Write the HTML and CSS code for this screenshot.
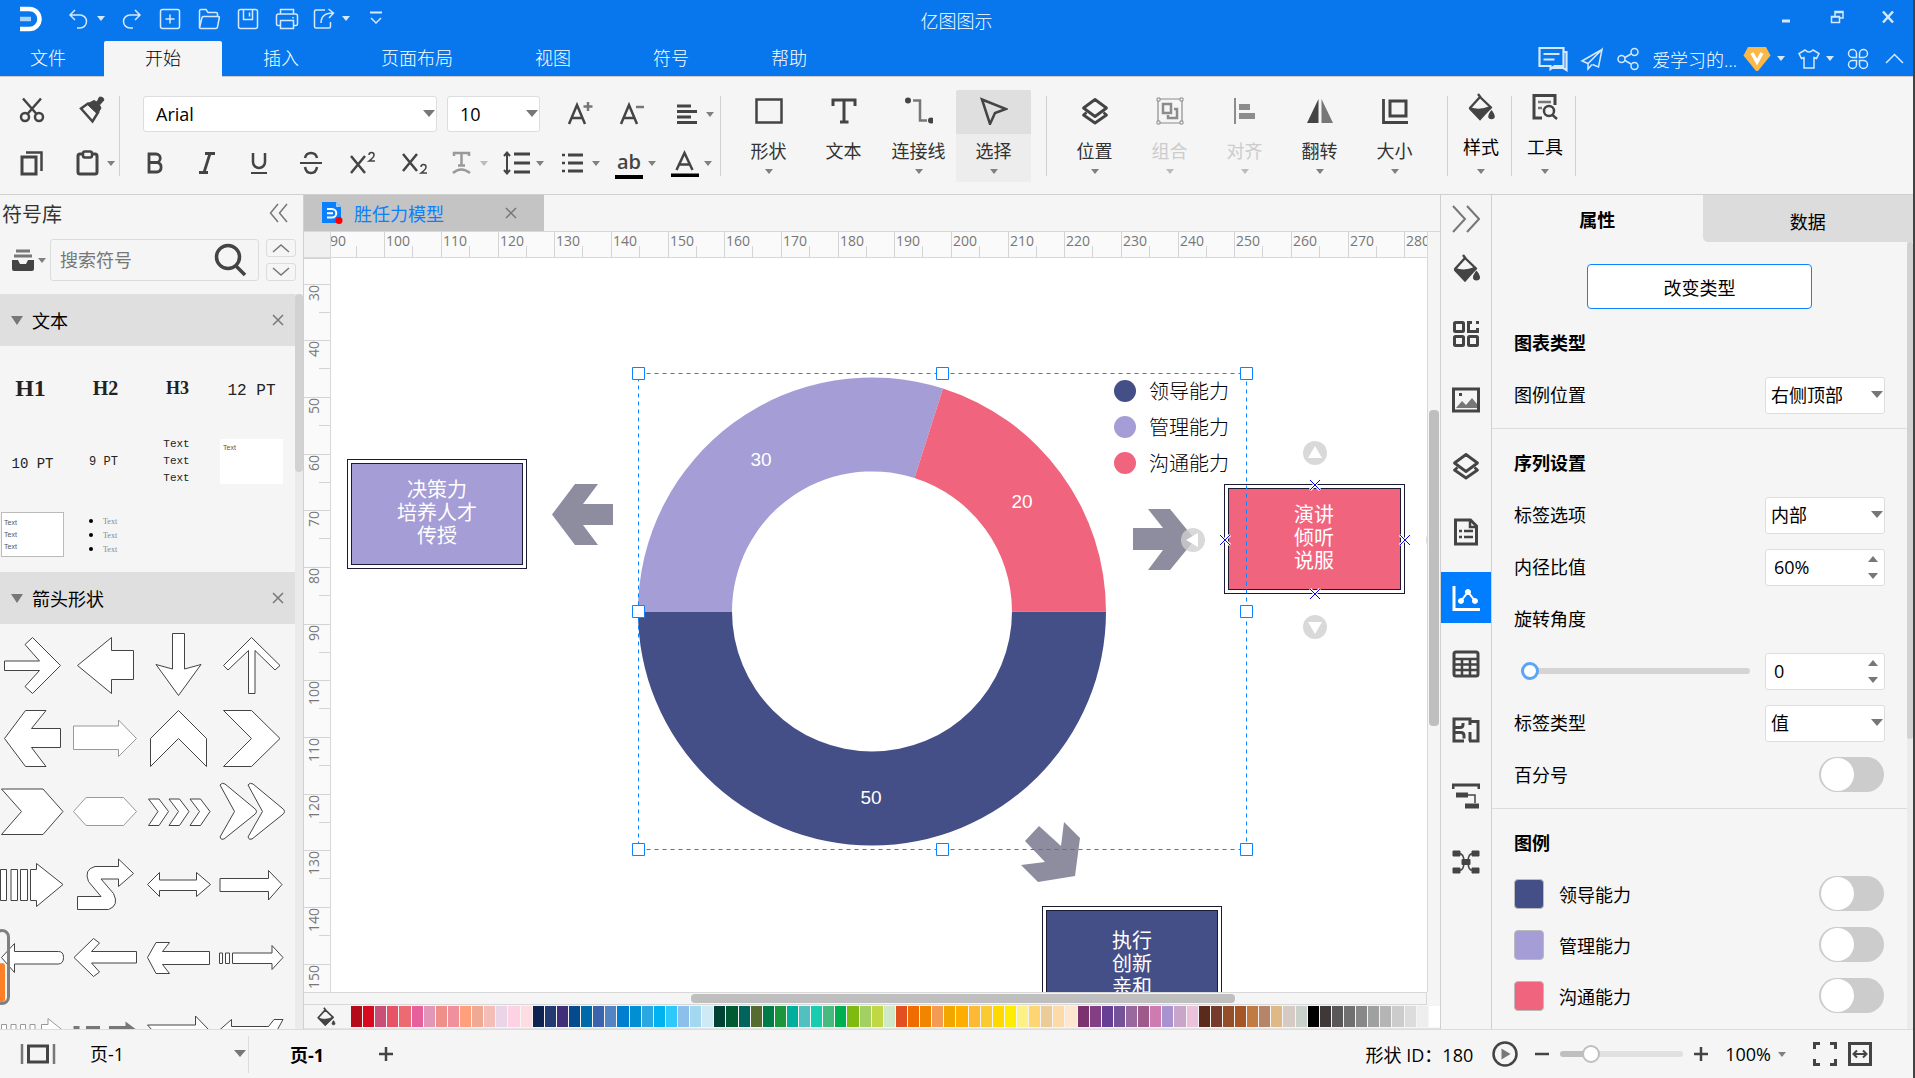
FILE: index.html
```
<!DOCTYPE html>
<html lang="zh-CN">
<head>
    <meta charset="UTF-8">
    <meta name="viewport" content="width=device-width, initial-scale=1.0">
    <title>亿图图示</title>
    <link rel="stylesheet" href="styles.css">
</head>
<body>

<svg class="defs" aria-hidden="true">
    <symbol id="bucket" viewBox="0 0 28 28"><path d="M11 1l3 4M13 4L3 15l10 10L24 14.5z" fill="none" stroke="currentColor" stroke-width="2.4" stroke-linejoin="round"/><path d="M3 15.5c7 2.500 13 2 20-1L13 26z" fill="currentColor"/><path d="M24.500 19c3 4 2.500 6 0 6s-3-2 0-6z" fill="currentColor"/></symbol>
    <symbol id="layers" viewBox="0 0 28 28"><path d="M14 2.500l11.500 8.500L14 19.500 2.500 11zM5.500 15.500l-3 2.500L14 26l11.500-8-3-2.500" fill="none" stroke="currentColor" stroke-width="2.800" stroke-linejoin="round"/></symbol>
</svg>

<div class="app">
    <header class="topbar">
        <div class="title-row">
            <div class="quick">
                <svg class="logo" viewBox="0 0 24 26"><path d="M1 3h9.500a10 10 0 0 1 0 20H1" fill="none" stroke="#fff" stroke-width="4.500"/><path d="M1 13h11" stroke="#a9d2fb" stroke-width="4.500"/></svg>
                <button class="q q-drop" aria-label="撤销"><svg viewBox="0 0 24 24"><path d="M8 3L3 8l5 5M3 8h10a6.500 6.500 0 0 1 0 13h-3"/></svg><i class="caret"></i></button>
                <button class="q" aria-label="重做"><svg viewBox="0 0 24 24"><path d="M16 3l5 5-5 5M21 8H11a6.500 6.500 0 0 0 0 13h3"/></svg></button>
                <button class="q" aria-label="新建"><svg viewBox="0 0 24 24"><rect x="2.500" y="2.500" width="19" height="19" rx="2"/><path d="M12 7.500v9M7.500 12h9"/></svg></button>
                <button class="q" aria-label="打开"><svg viewBox="0 0 24 24"><path d="M2.500 21V4q0-1.500 1.500-1.500h5l2 3h8q1.500 0 1.500 1.500v2.500M2.500 21L5 10.500q.3-1 1.500-1h15q1 0 .8 1L20.500 20q-.3 1.500-1.500 1.500H3.500q-1 0-1-1z"/></svg></button>
                <button class="q" aria-label="保存"><svg viewBox="0 0 24 24"><rect x="2.500" y="2.500" width="19" height="19" rx="2"/><path d="M7.500 2.500v10h9v-10M13.500 5.500v4"/></svg></button>
                <button class="q" aria-label="打印"><svg viewBox="0 0 24 24"><path d="M5.500 7V2.500h13V7M5 18.500H3Q1.500 18.500 1.500 17V9Q1.500 7 3.500 7h17q2 0 2 2v8q0 1.500-1.500 1.500h-2M5.500 13.500h13v8h-13zM18 10v1.500"/></svg></button>
                <button class="q q-drop" aria-label="导出"><svg viewBox="0 0 24 24"><path d="M13 3H4Q2.500 3 2.500 4.500v15Q2.500 21 4 21h13q1.500 0 1.500-1.500V15M9 16q0-10 12-10M16.500 2l5 4-4.500 5"/></svg><i class="caret"></i></button>
                <button class="q" aria-label="更多"><svg viewBox="0 0 24 24"><path d="M6 5.500h12" stroke-width="2"/><path d="M7 11l5 5 5-5"/></svg></button>
            </div>
            <span class="app-title">亿图图示</span>
            <div class="win">
                <button aria-label="最小化"><svg viewBox="0 0 16 16"><path d="M4 12h8" stroke-width="3"/></svg></button>
                <button aria-label="还原"><svg viewBox="0 0 16 16"><path d="M2.500 7.500h8v6h-8zM2 8h9M6 7V2.500h8V9h-3M6 3.500h8" stroke-width="1.500"/></svg></button>
                <button aria-label="关闭"><svg viewBox="0 0 16 16"><path d="M3 2.500l10 11M13 2.500l-10 11" stroke-width="2.500"/></svg></button>
            </div>
        </div>
        <div class="tab-row">
            <nav class="tabs">
                <a class="file" href="#">文件</a>
                <a class="active" href="#">开始</a>
                <a href="#">插入</a>
                <a href="#">页面布局</a>
                <a href="#">视图</a>
                <a href="#">符号</a>
                <a href="#">帮助</a>
            </nav>
            <div class="account">
                <button aria-label="评论"><svg class="w30" viewBox="0 0 30 26"><path d="M2 2h24v18h-9l-4 3v-3H2zM26 6h3v18l-3-2H15" stroke-width="2.200"/><path d="M6 8h16M6 13.500h11" stroke-width="2"/></svg></button>
                <button aria-label="发送"><svg viewBox="0 0 24 24"><path d="M22 2.500L2 14l6 2.500L22 2.500l-3.500 17.500-6-2.500M8 16.500V22l4-4.500"/></svg></button>
                <button aria-label="分享"><svg viewBox="0 0 24 24"><circle cx="5.500" cy="12" r="3.500"/><circle cx="18.500" cy="5" r="3.500"/><circle cx="18.500" cy="19" r="3.500"/><path d="M9 10.500L15 7M9 13.500L15 17"/></svg></button>
                <button class="user"><span>爱学习的...</span>
                    <svg class="vip" viewBox="0 0 28 26"><path d="M5 1h18l4.500 8.500L15 25h-2L.5 9.500z" fill="#f9b848"/><path d="M9 7l5 9 5-9" stroke="#fff" stroke-width="3.500"/></svg><i class="caret"></i></button>
                <button class="shirt" aria-label="皮肤"><svg viewBox="0 0 24 24"><path d="M8 3q4 4 8 0l6 3.500-2.500 5-2.500-1V21H7V10.500l-2.500 1L2 6.500z"/></svg><i class="caret"></i></button>
                <button aria-label="应用"><svg viewBox="0 0 24 24"><path d="M10.500 10.500v-4a4 4 0 1 0-4 4zM13.500 10.500v-4a4 4 0 1 1 4 4zM10.500 13.500v4a4 4 0 1 1-4-4zM13.500 13.500v4a4 4 0 1 0 4-4z"/></svg></button>
                <button aria-label="收起功能区"><svg viewBox="0 0 24 24"><path d="M4 16l8.500-8.500L21 16"/></svg></button>
            </div>
        </div>
    </header>

    <div class="ribbon">
        <div class="clip">
            <button aria-label="剪切"><svg viewBox="0 0 28 28"><path d="M5 2.500l14 16M23 2.500L9 18.500"/><circle cx="7" cy="21" r="4"/><circle cx="21" cy="21" r="4"/></svg></button>
            <button aria-label="格式刷"><svg viewBox="0 0 28 28"><path d="M3 12.500l7-5 10 9-5.500 9z"/><path d="M9 8l7-3.500 3 1.500 2.500-5q4-.5 4.500 3l-4.500 5 1.500 3-3.500 6z" fill="currentColor" stroke-width="1"/></svg></button>
            <button aria-label="复制"><svg viewBox="0 0 28 28"><path d="M4 8h14v17H4z" stroke-width="3"/><path d="M8 3.500h15.500V22" stroke-width="2.500"/></svg></button>
            <button class="paste" aria-label="粘贴"><svg viewBox="0 0 28 28"><rect x="4" y="5" width="19" height="20" rx="2" stroke-width="3"/><rect x="9" y="2.500" width="9" height="6" rx="2" fill="#f5f5f5"/></svg><i class="caret"></i></button>
        </div>
        <i class="sep"></i>
        <div class="font">
            <div class="font-row">
                <span class="drop family"><select aria-label="字体"><option>Arial</option></select></span>
                <span class="drop size"><select aria-label="字号"><option>10</option></select></span>
                <button class="grow" aria-label="增大字号"><svg viewBox="0 0 28 28"><path d="M3 24L11 5l8 19M6 18h10"/><path d="M22 2v9M17.500 6.500h9" stroke="#777"/></svg></button>
                <button aria-label="减小字号"><svg viewBox="0 0 28 28"><path d="M3 24L11 5l8 19M6 18h10"/><path d="M18 7h8" stroke="#777"/></svg></button>
                <button class="dd" aria-label="段落对齐"><svg viewBox="0 0 28 28"><path d="M4 6h14M4 11.500h20M4 17h14M4 22.500h20" stroke-width="2.800"/></svg><i class="caret"></i></button>
            </div>
            <div class="font-row low">
                <button aria-label="加粗"><svg viewBox="0 0 28 28"><path d="M8 5h7a4.200 4.200 0 0 1 0 8.500H8zM8 13.500h8a4.800 4.800 0 0 1 0 9.500H8z" stroke-width="2.800"/></svg></button>
                <button aria-label="斜体"><svg viewBox="0 0 28 28"><path d="M12 4.500h10M6 23.500h9M17 4.500l-6 19" stroke-width="2.800"/></svg></button>
                <button aria-label="下划线"><svg viewBox="0 0 28 28"><path d="M8 4v9a6 6 0 0 0 12 0V4"/><path d="M6 24h16" stroke-width="2"/></svg></button>
                <button aria-label="删除线"><svg viewBox="0 0 28 28"><path d="M20 9q-1-5-6-5t-6 5M8 18q1 6 6 6t6-6"/><path d="M3 14h22" stroke-width="2"/></svg></button>
                <button aria-label="上标"><svg viewBox="0 0 28 28"><path d="M2 7l14 17M16 7L2 24"/><path d="M20 6q0-2.500 2.500-2.500T25 6t-5 6h6" stroke-width="1.500"/></svg></button>
                <button aria-label="下标"><svg viewBox="0 0 28 28"><path d="M2 5l14 17M16 5L2 22"/><path d="M20 18q0-2.500 2.500-2.500T25 18t-5 6h6" stroke-width="1.500"/></svg></button>
                <button class="dd off first" aria-label="艺术字"><svg viewBox="0 0 28 28"><path d="M7 7V4h15v3M14.500 4v12M11 16.500h7M6 24q8-7 17 0"/></svg><i class="caret"></i></button>
                <button class="dd" aria-label="行距"><svg viewBox="0 0 28 28"><path d="M11 5h16M11 14h16M11 23h16" stroke-width="2.800"/><path d="M4 3.500v21M1 7l3-3.500L7 7M1 21l3 3.500L7 21" stroke-width="2"/></svg><i class="caret"></i></button>
                <button class="dd" aria-label="项目符号"><svg viewBox="0 0 28 28"><path d="M9 6h15M9 14h15M9 22h15" stroke-width="2.800"/><path d="M3 6h3M3 14h3M3 22h3"/></svg><i class="caret"></i></button>
                <button class="dd ink" aria-label="突出显示"><span>ab</span><i class="caret"></i></button>
                <button class="dd" aria-label="字体颜色"><svg viewBox="0 0 28 28"><path d="M5.500 21L13.500 4l8 17M9 15.500h9.500"/><path d="M0 27h28" stroke="#000" stroke-width="5"/></svg><i class="caret"></i></button>
            </div>
        </div>
        <i class="sep"></i>
        <div class="big-group">
            <button class="big"><svg viewBox="0 0 28 28"><rect x="1.500" y="2.500" width="25" height="23"/></svg>形状<i class="caret"></i></button>
            <button class="big"><svg viewBox="0 0 28 28"><path d="M3 9V3h22v6M14 3v21M10 25h8.500" stroke-width="3"/></svg>文本</button>
            <button class="big"><svg viewBox="0 0 28 28"><circle cx="3" cy="3.500" r="3" fill="currentColor" stroke="none"/><circle cx="26" cy="23.500" r="3" fill="currentColor" stroke="none"/><path d="M8 3.500h7v20h7" stroke="#777"/></svg>连接线<i class="caret"></i></button>
            <button class="big selected"><svg viewBox="0 0 28 28"><path d="M2 2.500l24 9.500-11 4-5 11z"/></svg>选择<i class="caret"></i></button>
        </div>
        <i class="sep"></i>
        <div class="big-group">
            <button class="big"><svg><use href="#layers"/></svg>位置<i class="caret"></i></button>
            <button class="big off"><svg viewBox="0 0 28 28"><path d="M2 2h24v24H2z" stroke-width="1.200"/><path d="M7 7h8v9H7zM18 12h3v9h-9v-3" stroke-width="2.500"/><path d="M1 1h3v3H1zM24 1h3v3h-3zM1 24h3v3H1zM24 24h3v3h-3z" fill="#f5f5f5" stroke-width="1"/></svg>组合<i class="caret"></i></button>
            <button class="big off"><svg viewBox="0 0 28 28"><path d="M4 1v26" stroke-width="2"/><path d="M8 7h11v6H8zM8 16h16v6H8z" fill="currentColor" stroke="none"/></svg>对齐<i class="caret"></i></button>
            <button class="big"><svg viewBox="0 0 28 28"><path d="M12.500 2v24H1z" fill="currentColor" stroke="none"/><path d="M15.500 2v24H27z" fill="#777" stroke="none"/></svg>翻转<i class="caret"></i></button>
            <button class="big"><svg viewBox="0 0 28 28"><path d="M2.500 2v23.500H27" stroke-width="2.800"/><rect x="9" y="4" width="16" height="15" stroke-width="3"/></svg>大小<i class="caret"></i></button>
        </div>
        <i class="sep"></i>
        <button class="big slim"><svg><use href="#bucket"/></svg>样式<i class="caret"></i></button>
        <i class="sep"></i>
        <button class="big slim"><svg viewBox="0 0 28 28"><path d="M24 12V2.500H3V25h8" stroke-width="3"/><path d="M7 9h13M7 15h4" stroke="#777"/><circle cx="18" cy="18" r="5"/><path d="M21.500 22l4.500 4"/></svg>工具<i class="caret"></i></button>
        <i class="sep"></i>
    </div>

    <div class="main">
        <aside class="library">
            <div class="lib-head"><span>符号库</span><button aria-label="折叠"><svg viewBox="0 0 20 20"><path d="M9 1L1.500 10 9 19M18 1l-7.500 9 7.500 9"/></svg></button></div>
            <div class="lib-search">
                <button class="stack" aria-label="符号分类"><svg viewBox="0 0 24 24"><path d="M5 3h14M3 8h18" stroke="#777" stroke-width="3"/><path d="M1 12h6l2 4h6l2-4h6v9q0 2-2 2H3q-2 0-2-2z" fill="#444" stroke="none"/></svg><i class="caret"></i></button>
                <label class="search"><input type="text" placeholder="搜索符号" aria-label="搜索符号"><svg viewBox="0 0 34 34"><circle cx="14" cy="14" r="11.500"/><path d="M22 23l9 9"/></svg></label>
                <div class="updown">
                    <button aria-label="上一个"><svg viewBox="0 0 18 10"><path d="M1 9l8-7 8 7"/></svg></button>
                    <button aria-label="下一个"><svg viewBox="0 0 18 10"><path d="M1 1l8 7 8-7"/></svg></button>
                </div>
            </div>
            <div class="lib-body">
                <div class="lib-list">
                    <h3><i class="caret"></i>文本<button aria-label="关闭文本"><svg viewBox="0 0 12 12"><path d="M1 1l10 10M11 1L1 11"/></svg></button></h3>
                    <div class="shapes texts">
                        <span class="h1">H1</span><span class="h2">H2</span><span class="h3">H3</span><span class="pt12">12 PT</span>
                        <span class="pt10">10 PT</span><span class="pt9">9 PT</span><span class="lines">Text<br>Text<br>Text</span><span><b class="note">Text</b></span>
                        <span><b class="note framed">Text<br>Text<br>Text</b></span>
                        <ul><li>Text</li><li>Text</li><li>Text</li></ul>
                    </div>
                    <h3><i class="caret"></i>箭头形状<button aria-label="关闭箭头形状"><svg viewBox="0 0 12 12"><path d="M1 1l10 10M11 1L1 11"/></svg></button></h3>
                    <div class="shapes arrows">
                        <svg viewBox="0 0 73 73"><path d="M8.500 32H43.500L29 15.500l7.500-7L64.500 36.500l-28 28-7.500-7 14.500-16H8.500z"/></svg>
                        <svg viewBox="0 0 73 73"><path d="M8.500 36.500l34-28v13h22v29h-22v14z"/></svg>
                        <svg viewBox="0 0 73 73"><path d="M30.500 4.500h12V40L59 35.500l-22.500 31L14 35.500 30.500 40z"/></svg>
                        <svg viewBox="0 0 73 73"><path d="M36.500 8.500L65 36.500 60 41 40 21.500v43h-6.500v-43L13 41l-4.500-4.500z"/></svg>
                        <svg viewBox="0 0 73 73"><path d="M8.500 36.500l21-28H50l-14.500 18h29v19h-29l14.500 19H29.500z"/></svg>
                        <svg class="pale" viewBox="0 0 73 73"><path d="M4.500 24h45v-6l18 18.500-18 18v-7h-45z"/></svg>
                        <svg viewBox="0 0 73 73"><path d="M36.500 8.500l28 28v28l-28-28-28 28v-28z"/></svg>
                        <svg viewBox="0 0 73 73"><path d="M8.500 8.500h28L65 36.500l-28.500 28h-28l28-28z"/></svg>
                        <svg viewBox="0 0 73 73"><path d="M5.500 14H47l20 22.500-20 23H5.500l20-23z"/></svg>
                        <svg class="pale" viewBox="0 0 73 73"><path d="M4.500 36.500l12.500-14h37.500l13 14-13 14H17z"/></svg>
                        <svg viewBox="0 0 73 73"><path d="M6.500 24H17l9.500 12.500-9.500 14H6.500L16 36.500zM27 24h10.500L47 36.500l-9.500 14H27l9.500-14zM48 24h10.500L68 36.500l-9.500 14H48l9.500-14z"/></svg>
                        <svg viewBox="0 0 73 73"><path d="M5 10q2-3 5-1l29 24q5 3.500 0 7L9 64q-3 1.500-4-2l14.500-25.500zM33 10q2-3 5-1l29 24q5 3.500 0 7L37 64q-3 1.500-4-2l14.500-25.500z"/></svg>
                        <svg viewBox="0 0 73 73"><path d="M4.500 21.500h6v31h-6zM15 21.500h6.500v31H15zM24.500 21.500h7v31h-7zM34.500 21.500h6v-6L67 36.500l-26.500 22v-6h-6z"/></svg>
                        <svg viewBox="0 0 73 73"><path d="M8.500 48.500H32L19.500 33.500q-5-12 6.500-15h23.500V11l15 14.500-15 13V31H32l12.500 14.500q6 12-5 16h-31z"/></svg>
                        <svg viewBox="0 0 73 73"><path d="M5.500 36.500l12-12V32h37v-7.500l14 12-14 12v-6h-37v6z"/></svg>
                        <svg viewBox="0 0 73 73"><path d="M5 30.500h48.500v-8L67 36.500 53.500 52v-8.500H5z"/></svg>
                        <svg viewBox="0 0 73 73"><path d="M5.500 36.500l13-14v8h44q5 0 5 6t-5 6.500h-44v8.500z"/></svg>
                        <svg viewBox="0 0 73 73"><path d="M5 36.500l19.500-19 6 4.500-8 8.500h45V42h-45l8 9-6 4.500z"/></svg>
                        <svg viewBox="0 0 73 73"><path d="M5.500 36.500l8.500-15h13.500l-7 9h47v13h-47l7 9H14z"/></svg>
                        <svg viewBox="0 0 73 73"><path d="M4.500 32h3v10.500h-3zM10.500 32h4v10.500h-4zM17.500 32H57v-7.500l11 12-11 12v-6H17.500z"/></svg>
                        <svg class="pale" viewBox="0 0 73 73"><path d="M5.500 30.500h5v12h-5zM15 30.500h5v12h-5zM24.500 30.500h5v12h-5zM34 30.500h5v12h-5zM45.500 30.500H52v-6l15 12-15 12v-6h-6.500z"/></svg>
                        <svg class="solid" viewBox="0 0 73 73"><path d="M4.500 32h6v9h-6zM17 32h14v9H17zM40 32h16.500v-4.500l12 9-12 9V41H40z"/></svg>
                        <svg viewBox="0 0 73 73"><path d="M5.500 31h48v-9l14 14.500-14 14V42h-38z"/></svg>
                        <svg viewBox="0 0 73 73"><path d="M4 36.500l12.500-11v7h37l5.500-7h9l-6 11 6 11h-9l-5.500-7h-37v7z"/></svg>
                    </div>
                </div>
                <div class="track"><div class="thumb"></div></div>
            </div>
            <div class="edge-grip"></div>
        </aside>

        <section class="doc">
            <div class="doc-tabs">
                <div class="doc-tab">
                    <svg viewBox="0 0 22 22"><path d="M1 0h14l5 5v16H1z" fill="#0a80ff"/><path d="M15 0l5 5h-5z" fill="#9cc9f8"/><path d="M6 7h5a4 4 0 0 1 0 8.500H6M6 11.200h6" fill="none" stroke="#fff" stroke-width="2"/><circle cx="18" cy="18.500" r="3.500" fill="#f00"/></svg>
                    <a href="#">胜任力模型</a>
                    <button aria-label="关闭文档"><svg viewBox="0 0 12 12"><path d="M1 1l10 10M11 1L1 11"/></svg></button>
                </div>
            </div>
            <div class="work">
                <div class="corner"></div>
                <svg class="ruler-h" id="rulerH"></svg>
                <svg class="ruler-v" id="rulerV"></svg>
                <div class="stage">
                    <svg>
                        <g transform="translate(-331 -258)">
                            <!-- cards -->
                            <g class="card"><rect x="347.500" y="459.500" width="179" height="109"/><rect class="lilac" x="351.500" y="463.500" width="171" height="101"/></g>
                            <text class="card-text" x="437" y="497">决策力<tspan x="437" dy="23">培养人才</tspan><tspan x="437" dy="23">传授</tspan></text>
                            <g class="card"><rect x="1042.500" y="906.500" width="179" height="109"/><rect class="navy" x="1046.500" y="910.500" width="171" height="101"/></g>
                            <text class="card-text" x="1132" y="948">执行<tspan x="1132" dy="23">创新</tspan><tspan x="1132" dy="23">亲和</tspan></text>
                            <g class="card"><rect x="1224.500" y="484.500" width="180" height="109"/><rect class="rose" x="1228.500" y="488.500" width="172" height="101"/></g>
                            <text class="card-text" x="1314" y="522">演讲<tspan x="1314" dy="23">倾听</tspan><tspan x="1314" dy="23">说服</tspan></text>

                            <!-- arrows -->
                            <g fill="#8e8c9f">
                                <path d="M552 514.500L575 484h23l-15 20h30v21h-30l15 20h-23z"/>
                                <path d="M1133 528h30l-15-19h22l25 30.500-25 30.500h-22l15-20h-30z"/>
                                <path d="M1064 822l16 16-5 38-37 6-17-17 24-3-20-21 14-15 22 20z"/>
                            </g>

                            <!-- donut -->
                            <path class="navy" d="M638 611.500a234 234 0 0 0 468 0h-94a140 140 0 0 1-280 0z"/>
                            <path class="lilac" d="M638 611.500A234 234 0 0 1 943 388.500L914.500 478A140 140 0 0 0 732 611.500z"/>
                            <path class="rose" d="M943 388.500A234 234 0 0 1 1106 611.500H1012A140 140 0 0 0 914.500 478z"/>
                            <g class="value"><text x="761" y="466">30</text><text x="1022" y="508">20</text><text x="871" y="804">50</text></g>

                            <!-- legend -->
                            <circle class="navy" cx="1125" cy="391" r="11"/><circle class="lilac" cx="1125" cy="427" r="11"/><circle class="rose" cx="1125" cy="463" r="11"/>
                            <g class="legend-text"><text x="1149" y="399">领导能力</text><text x="1149" y="435">管理能力</text><text x="1149" y="471">沟通能力</text></g>

                            <!-- selection -->
                            <g fill="none" stroke="#0a84ff"><rect x="638.500" y="373.500" width="608" height="476" stroke-dasharray="4 4"/></g>
                            <g fill="#fff" stroke="#0a84ff">
                                <path d="M632.500 367.500h12v12h-12zM936.500 367.500h12v12h-12zM1240.500 367.500h12v12h-12zM632.500 605.500h12v12h-12zM1240.500 605.500h12v12h-12zM632.500 843.500h12v12h-12zM936.500 843.500h12v12h-12zM1240.500 843.500h12v12h-12z"/>
                            </g>

                            <!-- quick connect handles -->
                            <g fill="#d0d0d0" fill-opacity="0.8"><circle cx="1315" cy="453" r="12"/><circle cx="1193" cy="540" r="12"/><circle cx="1315" cy="627" r="12"/><circle cx="1438" cy="540" r="12"/></g>
                            <path fill="#fff" d="M1315 446l7 12h-14zM1186 540l12-7v14zM1315 634l7-12h-14z"/>
                            <g class="cross-halo"><path d="M1310 480l10 10m0-10l-10 10M1220 535l10 10m0-10l-10 10M1400 535l10 10m0-10l-10 10M1310 589l10 10m0-10l-10 10"/></g>
                            <g class="cross"><path d="M1310 480l10 10m0-10l-10 10M1220 535l10 10m0-10l-10 10M1400 535l10 10m0-10l-10 10M1310 589l10 10m0-10l-10 10"/></g>
                        </g>
                    </svg>
                </div>
                <div class="vbar"><div class="thumb"></div></div>
                <div class="hbar"><div class="thumb"></div></div>
            </div>
            <div class="palette">
                <button class="fill" aria-label="填充"><svg><use href="#bucket"/></svg></button>
                <div class="swatches" id="swatches"></div>
            </div>
        </section>

        <nav class="rail">
            <button class="fold" aria-label="折叠面板"><svg viewBox="0 0 28 28"><path d="M1 1l12 13L1 27M15 1l12 13-12 13" stroke="#777" stroke-width="2"/></svg></button>
            <button aria-label="填充"><svg><use href="#bucket"/></svg></button>
            <button aria-label="符号"><svg viewBox="0 0 28 28"><rect x="2.500" y="2.500" width="9" height="9" rx="1"/><rect x="2.500" y="16.500" width="9" height="9" rx="1"/><rect x="16.500" y="16.500" width="9" height="9" rx="1"/><path d="M20 2.500h-3.500v9h9V8M24 2.500h3"/></svg></button>
            <button aria-label="图片"><svg viewBox="0 0 28 28"><rect x="1.500" y="3" width="25" height="22"/><path d="M4 22l6-7 4 4 6-7 5 6v4z" fill="#777" stroke="none"/><path d="M7 8.500h3"/></svg></button>
            <button aria-label="图层"><svg><use href="#layers"/></svg></button>
            <button aria-label="文档"><svg viewBox="0 0 28 28"><path d="M3.500 2h15l6 6v18h-21z"/><path d="M18 2v7h7M7 13h3M12 13h9M7 19h3M12 19h9" stroke-width="2.500"/></svg></button>
            <button class="active" aria-label="图表"><svg viewBox="0 0 28 28"><path d="M2 2v23.500h26" stroke-width="3"/><path d="M9 17l7-9 7 9" stroke-width="2"/><path d="M9 14a3 3 0 1 1-.1 0zM16 5a3 3 0 1 1-.1 0zM23 14a3 3 0 1 1-.1 0z" fill="currentColor" stroke="none"/></svg></button>
            <button aria-label="表格"><svg viewBox="0 0 28 28"><rect x="2" y="2" width="24" height="24" rx="2"/><path d="M2 9h24M2 14.500h24M2 20h24M10 9v17M18 9v17" stroke-width="2.500"/></svg></button>
            <button aria-label="平面图"><svg viewBox="0 0 28 28"><path d="M12 25H2V3h16v6M18 5.500h8V25h-9M2 11.500h6q3 0 3-3V7M2 16.500h7q3 0 3 3v3M18 16v9"/></svg></button>
            <button aria-label="甘特图"><svg viewBox="0 0 28 28"><path d="M1 7V3h26v4"/><path d="M4 13h12" stroke-width="5"/><path d="M16 13h7v8" stroke-width="1.500"/><path d="M13 24h14" stroke-width="5"/></svg></button>
            <button aria-label="思维导图"><svg viewBox="0 0 28 28"><path d="M1 3h7v5H1zM20 3h7v5h-7zM1 20h7v5H1zM20 20h7v5h-7zM10 11.500h8v5h-8z" fill="currentColor" stroke-width="1"/><path d="M7 5.500q5 0 5 8.500t-5 8.500M21 5.500q-5 0-5 8.500t5 8.500" stroke-width="1.500"/></svg></button>
        </nav>

        <aside class="props">
            <div class="prop-tabs"><button class="on">属性</button><button>数据</button></div>
            <div class="prop-body">
                <div class="prop-list">
                    <button class="change">改变类型</button>
                    <section>
                        <h4>图表类型</h4>
                        <div class="row"><label for="legendPos">图例位置</label><span class="drop"><select id="legendPos"><option>右侧顶部</option></select></span></div>
                    </section>
                    <section>
                        <h4>序列设置</h4>
                        <div class="row"><label for="labelOpt">标签选项</label><span class="drop"><select id="labelOpt"><option>内部</option></select></span></div>
                        <div class="row"><label for="inner">内径比值</label><span class="spin"><input type="text" id="inner" value="60%"><button class="up" aria-label="增加"></button><button class="down" aria-label="减少"></button></span></div>
                        <div class="row"><label for="angle">旋转角度</label></div>
                        <div class="row"><input type="range" id="angle" class="angle" min="0" max="360" value="0"><span class="spin"><input type="text" value="0" aria-label="旋转角度值"><button class="up" aria-label="增加"></button><button class="down" aria-label="减少"></button></span></div>
                        <div class="row"><label for="labelType">标签类型</label><span class="drop"><select id="labelType"><option>值</option></select></span></div>
                        <div class="row"><label for="percent">百分号</label><input type="checkbox" class="toggle" id="percent"></div>
                    </section>
                    <section class="series">
                        <h4>图例</h4>
                        <div class="row"><i class="chip navy"></i><label for="s1">领导能力</label><input type="checkbox" class="toggle" id="s1"></div>
                        <div class="row"><i class="chip lilac"></i><label for="s2">管理能力</label><input type="checkbox" class="toggle" id="s2"></div>
                        <div class="row"><i class="chip rose"></i><label for="s3">沟通能力</label><input type="checkbox" class="toggle" id="s3"></div>
                    </section>
                </div>
                <div class="track"><div class="thumb"></div></div>
            </div>
        </aside>
    </div>

    <footer class="status">
        <button class="pages" aria-label="页面列表"><svg viewBox="0 0 36 24"><path d="M2 2v20M34 2v20" stroke="#777" stroke-width="2.500"/><rect x="8.500" y="4" width="19" height="16" stroke-width="3"/></svg></button>
        <span class="drop page"><select aria-label="页面"><option>页-1</option></select></span>
        <button class="page-tab">页-1</button>
        <button class="icon" aria-label="新建页面"><svg viewBox="0 0 16 16"><path d="M8 1v14M1 8h14"/></svg></button>
        <span class="shape-id">形状 ID：180</span>
        <button class="icon play" aria-label="播放"><svg viewBox="0 0 26 26"><circle cx="13" cy="13" r="11.500"/><path d="M9.500 7.500v11l9-5.500z" fill="#777" stroke="none"/></svg></button>
        <button class="icon" aria-label="缩小"><svg viewBox="0 0 16 16"><path d="M1 8h14"/></svg></button>
        <input type="range" class="zoom" aria-label="缩放" min="0" max="100" value="21">
        <button class="icon" aria-label="放大"><svg viewBox="0 0 16 16"><path d="M8 1v14M1 8h14"/></svg></button>
        <button class="percent">100%<i class="caret"></i></button>
        <button class="icon fit" aria-label="全屏"><svg viewBox="0 0 26 26"><path d="M8 2.500H2.500V8M18 2.500h5.500V8M8 23.500H2.500V18M18 23.500h5.500V18" stroke-width="3"/></svg></button>
        <button class="icon fit" aria-label="适应宽度"><svg viewBox="0 0 26 26"><rect x="2.500" y="2.500" width="21" height="21" stroke-width="3"/><path d="M7 13h12M10 9.500L6.500 13l3.500 3.500M16 9.500l3.500 3.500-3.500 3.500" stroke-width="2"/></svg></button>
    </footer>
</div>

<script src="script.js"></script>
</body>
</html>
```

FILE: styles.css
```
* { box-sizing: border-box; }
html, body { height: 100%; margin: 0; }
body { font-family: "Open Sans", "Noto Sans CJK SC", sans-serif; font-size: 18px; color: #000; background: #f5f5f5; overflow: hidden; }
button, input, select { font: inherit; color: inherit; }
button { display: flex; align-items: center; justify-content: center; padding: 0; border: 0; background: none; cursor: pointer; }
a { color: inherit; text-decoration: none; }
svg { flex: none; fill: none; stroke: currentColor; }
.defs { display: none; }

.app { display: flex; flex-direction: column; height: 100%; border-right: 2px solid #434343; }
.caret { flex: none; border: 5px solid transparent; border-top: 6px solid #808080; border-bottom: 0; }

/* title bar */
.topbar { background: #0877ed; color: #fff; border-bottom: 1px solid #ccc; font-weight: 300; }
.topbar .caret { border-top-color: #d5e8fc; }
.topbar button { color: #d5e8fc; }
.title-row { display: grid; grid-template-columns: 1fr auto 1fr; align-items: center; height: 41px; padding-bottom: 4px; }
.quick { display: flex; align-items: center; padding-left: 19px; }
.quick .logo { width: 24px; height: 26px; margin-right: 18px; stroke: none; }
.q { width: 39px; }
.q svg { width: 24px; height: 24px; stroke-width: 1.5; }
.q-drop { width: 50px; gap: 6px; }
.app-title { padding-top: 2px; }
.win { display: flex; justify-content: flex-end; gap: 35px; padding: 0 17px 4px 0; }
.win svg { width: 16px; height: 16px; }
.tab-row { display: flex; justify-content: space-between; height: 35px; }
.tabs { display: flex; }
.tabs a { padding: 0 41px; line-height: 35px; }
.tabs .file { padding: 0 30px; margin-right: 8px; }
.tabs .active { background: #f5f5f5; color: #000; border-radius: 2px 2px 0 0; margin-bottom: -1px; }
.account { display: flex; align-items: center; gap: 12px; padding-right: 7px; }
.account svg { width: 24px; height: 24px; stroke-width: 1.5; }
.account .w30 { width: 31px; height: 26px; }
.account .user { gap: 6px; color: #fff; }
.account .vip { width: 28px; height: 26px; stroke: none; }
.account .shirt { gap: 5px; }

/* ribbon */
.ribbon { display: flex; align-items: flex-start; height: 118px; color: #444; border-bottom: 1px solid #d0d0d0; }
.ribbon svg { width: 28px; height: 28px; stroke-width: 2.5; }
.sep { flex: none; width: 1px; height: 80px; margin-top: 19px; background: #d0d0d0; }
.ribbon .caret, .shirt .caret, .user .caret, .quick .caret, .stack .caret { border-width: 4px; border-top-width: 5px; border-bottom: 0; }
.clip { display: grid; grid-template-columns: 60px 41px; row-gap: 25px; padding: 19px 0 0 18px; }
.clip button { height: 28px; justify-content: flex-start; }
.clip .paste { gap: 5px; margin-left: -4px; }
.font { width: 600px; padding: 19px 0 0 9px; }
.font-row { display: flex; height: 36px; }
.font-row.low { margin-top: 13px; }
.font-row button { flex: none; width: 52px; height: 36px; }
.font-row .dd { width: 41px; margin-left: 15px; justify-content: flex-start; gap: 5px; }
.font-row .dd.first { margin-left: 6px; }
.font-row .grow { margin-left: 14px; }
.ink span { width: 28px; height: 32px; border-bottom: 4px solid #000; font-size: 20px; line-height: 30px; font-weight: 600; }
.off { color: #ccc; }
.off svg { color: #999; }
.off .caret { border-top-color: #bbb; }
.drop { position: relative; display: block; flex: none; height: 37px; }
.drop::after { content: ""; position: absolute; right: 2px; top: 14px; border: 6px solid transparent; border-top: 7px solid #777; border-bottom: 0; pointer-events: none; }
.drop select { width: 100%; height: 100%; padding: 0 5px; appearance: none; background: #fff; border: 1px solid #dcdde0; border-radius: 3px; }
.drop.family { width: 294px; margin-left: 14px; }
.drop.size { width: 93px; margin-left: 10px; }
.font .drop { height: 36px; }
.font select { padding-left: 12px; color: #000; }
.big-group { display: flex; padding: 0 15px 0 10px; }
.big { position: relative; flex-direction: column; justify-content: flex-start; width: 75px; height: 92px; margin-top: 13px; padding-top: 7px; line-height: 26px; color: #333; border-radius: 2px; }
.big svg { margin-bottom: 13px; color: #444; }
.big .caret { position: absolute; bottom: 8px; }
.big.selected { background: linear-gradient(#dfdfdf 44px, #ededed 44px); }
.big.slim { width: 63px; padding: 3px 0 0 3px; color: #000; }
.big.off { color: #ccc; }
.big.off svg { color: #8c8c8c; }

/* columns */
.main { flex: 1; display: flex; min-height: 0; }
.track { background: #ebebeb; }
.thumb { background: #d2d2d2; border-radius: 4px; }

/* symbol library */
.library { position: relative; flex: none; display: flex; flex-direction: column; width: 304px; border-right: 1px solid #d0d0d0; }
.lib-head { display: flex; justify-content: space-between; align-items: center; height: 36px; padding: 0 14px 0 2px; font-size: 20px; color: #333; }
.lib-head svg { width: 20px; height: 20px; color: #777; stroke-width: 1.5; }
.lib-search { display: flex; align-items: center; height: 58px; padding: 8px 7px 8px 11px; margin-bottom: 5px; }
.stack { gap: 3px; width: 39px; justify-content: flex-start; }
.stack svg { width: 24px; height: 24px; }
.search { display: flex; align-items: center; flex: 1; min-width: 0; height: 42px; border: 1px solid #dcdcdc; border-radius: 3px; padding-right: 10px; }
.search input { flex: 1; min-width: 0; width: 0; padding: 0 9px; border: 0; background: none; }
.search input::placeholder { color: #777; }
.search svg { width: 34px; height: 34px; color: #444; stroke-width: 3.5; }
.updown { display: flex; flex-direction: column; gap: 6px; margin-left: 7px; }
.updown button { width: 30px; height: 18px; border: 1px solid #dcdcdc; border-radius: 3px; }
.updown svg { width: 18px; height: 10px; color: #777; stroke-width: 1.5; }
.lib-body { flex: 1; display: flex; min-height: 0; }
.lib-list { flex: 1; overflow: hidden; }
.lib-list h3 { display: flex; align-items: center; gap: 9px; height: 52px; margin: 0; padding: 0 10px 0 11px; background: #dfdfdf; font-size: 18px; font-weight: 400; }
.lib-list h3 .caret { border-width: 6px; border-top: 9px solid #777; border-bottom: 0; }
.lib-list h3 button { margin-left: auto; }
.lib-list h3 svg, .doc-tab button svg { width: 12px; height: 12px; margin: 0 1px; color: #777; stroke-width: 1.5; }
.shapes { display: grid; grid-template-columns: repeat(4, 73px); grid-auto-rows: 73px; width: 292px; margin-left: -4px; }
.texts { padding-top: 6px; height: 226px; font-family: "Liberation Serif", serif; color: #222; }
.texts span { display: flex; align-items: center; justify-content: center; padding-right: 4px; }
.texts .h1 { font-size: 24px; font-weight: 700; }
.texts .h2 { font-size: 20px; font-weight: 700; padding-right: 0; }
.texts .h3 { font-size: 18px; font-weight: 700; padding-right: 2px; }
.texts .pt12 { font: 16px "Liberation Mono", monospace; padding: 4px 0 0; white-space: nowrap; }
.texts .pt10 { font: 14px "Liberation Mono", monospace; padding: 4px 0 0; }
.texts .pt9 { font: 12px "Liberation Mono", monospace; }
.texts .lines { font: 11px/17px "Liberation Mono", monospace; }
.texts span:has(.note) { padding: 0; }
.note { width: 63px; height: 45px; padding: 3px; background: #fff; font: 7px/12px "Liberation Sans", sans-serif; color: #555; }
.note.framed { border: 1px solid #bbb; padding: 4px 2px; }
.texts ul { align-self: center; margin: 0; padding-left: 34px; font: 8px/12px "Liberation Serif", serif; color: #888; }
.texts li::marker { color: #000; font-size: 12px; }
.arrows { padding-top: 5px; }
.arrows svg { width: 73px; height: 73px; fill: #fff; stroke: #444; }
.arrows .pale { stroke: #999; }
.arrows .solid { fill: #777; stroke: none; }
.lib-body .track { width: 8px; }
.lib-body .thumb { height: 178px; }
.edge-grip { position: absolute; left: -6px; bottom: 24px; width: 16px; height: 76px; border: 3px solid #808080; border-radius: 8px; }
.edge-grip::after { content: ""; position: absolute; right: 2px; bottom: 0; width: 6px; height: 39px; border-radius: 3px; background: #ff7f27; }

/* document */
.doc { flex: 1; display: flex; flex-direction: column; min-width: 0; }
.doc-tabs { display: flex; height: 37px; border-bottom: 1px solid #d8d8d8; }
.doc-tab { display: flex; align-items: center; width: 240px; padding: 0 26px 0 17px; background: #c4c4c4; color: #0a80ff; }
.doc-tab > svg { width: 22px; height: 22px; margin-right: 11px; stroke: none; }
.doc-tab button { margin-left: auto; }
.work { flex: 1; display: grid; grid-template-columns: 27px 1fr 13px; grid-template-rows: 26px 1fr 13px; min-height: 0; }
.work > * { min-width: 0; min-height: 0; }
.corner { background: #f0f0f0; border-right: 1px solid #d8d8d8; border-bottom: 1px solid #d8d8d8; }
.ruler-h { width: 100%; height: 26px; background: #fafafa; border-bottom: 1px solid #d8d8d8; }
.ruler-v { width: 27px; height: 100%; background: #fafafa; border-right: 1px solid #d8d8d8; grid-row: 2; }
.work line { stroke: #d4d4d4; shape-rendering: crispEdges; }
.work text { stroke: none; fill: #777; font-size: 14px; }
.stage { background: #fff; overflow: hidden; }
.stage > svg { display: block; width: 100%; height: 100%; stroke: none; }
.card rect { stroke: #1b1b33; fill: #fff; }
.stage .navy { fill: #444f88; }
.stage .lilac { fill: #a49dd6; }
.stage .rose { fill: #f0647e; }
.work .card-text { fill: #fff; font-size: 20px; text-anchor: middle; }
.work .value text { fill: #fff; font: 19px "Liberation Sans", sans-serif; text-anchor: middle; }
.work .legend-text text { fill: #000; font-size: 20px; font-weight: 300; }
.cross-halo { stroke: #fff; stroke-width: 3; }
.cross { stroke: #00f; }
.vbar { grid-column: 3; grid-row: 1 / 3; border-left: 1px solid #d8d8d8; padding: 178px 1px 0; }
.vbar .thumb { height: 316px; background: #bfbfbf; }
.hbar { grid-column: 1 / 3; grid-row: 3; border: 1px solid #d8d8d8; border-left: 0; padding: 1px 191px 1px 387px; }
.hbar .thumb { height: 9px; background: #bfbfbf; }
.palette { display: flex; height: 24px; border-bottom: 1px solid #e4e4e4; padding: 1px 0; }
.palette .fill { width: 43px; margin-right: 4px; }
.palette svg { width: 20px; height: 20px; color: #444; }
.swatches { flex: 1; display: flex; gap: 1px; }
.swatches i { flex: 1; }

/* icon rail */
.rail { flex: none; display: flex; flex-direction: column; gap: 15px; width: 52px; border: solid #d0d0d0; border-width: 0 1px; color: #444; }
.rail button { height: 51px; }
.rail .fold { height: 47px; margin-bottom: -15px; }
.rail svg { width: 28px; height: 28px; stroke-width: 3; }
.rail .active { background: #007eff; color: #fff; }

/* properties */
.props { flex: none; display: flex; flex-direction: column; width: 421px; }
.prop-tabs { display: flex; height: 47px; }
.prop-tabs button { flex: 1; padding-top: 4px; background: #dcdcdc; border-radius: 0 0 0 5px; }
.prop-tabs .on { background: none; font-weight: 700; padding-top: 0; }
.prop-body { flex: 1; display: flex; min-height: 0; }
.prop-list { flex: 1; overflow: hidden; padding-top: 22px; }
.prop-body .track { width: 6px; }
.prop-body .thumb { height: 497px; }
.change { width: 225px; height: 45px; margin: 0 auto; background: #fff; border: 1px solid #0a84ff; border-radius: 4px; }
.props section { padding: 8px 22px 7px; border-bottom: 1px solid #dcdcdc; }
.props section:last-child { border-bottom: 0; }
.props h4 { margin: 0; font-size: 18px; line-height: 52px; font-weight: 700; }
.row { display: flex; align-items: center; justify-content: space-between; height: 52px; }
.row label { margin-bottom: 2px; }
.row .drop, .spin { width: 120px; }
.spin { position: relative; height: 37px; }
.spin input { width: 100%; height: 100%; padding: 0 8px; background: #fff; border: 1px solid #dcdde0; border-radius: 3px; }
.spin button { position: absolute; right: 7px; border: 5px solid transparent; }
.spin .up { top: 2px; border-bottom: 6px solid #777; }
.spin .down { bottom: 2px; border-top: 6px solid #777; }
.angle, .zoom { appearance: none; margin: 0; background: none; }
.angle { width: 229px; margin-left: 7px; }
.angle::-webkit-slider-runnable-track { height: 6px; border-radius: 3px; background: #d4d4d4; }
.angle::-webkit-slider-thumb { appearance: none; width: 18px; height: 18px; margin-top: -6px; border: 3px solid #5aa5f7; border-radius: 50%; background: #fff; }
.toggle { appearance: none; width: 65px; height: 35px; margin: 0 1px 2px auto; padding: 1px 2px; border-radius: 18px; background: #ccc; }
.toggle::before { content: ""; display: block; width: 33px; height: 33px; border-radius: 50%; background: #fff; }
.series .row { height: 51px; }
.chip { width: 30px; height: 30px; margin: 0 15px 2px 0; border: 1px solid #bbb; border-radius: 4px; }
.chip.navy { background: #444f88; }
.chip.lilac { background: #a49dd6; }
.chip.rose { background: #f0647e; }

/* status bar */
.status { display: flex; align-items: center; height: 49px; padding: 0 40px 0 20px; border-top: 1px solid #dcdcdc; }
.pages svg { width: 36px; height: 24px; color: #444; }
.drop.page { width: 164px; margin-left: 29px; border-right: 1px solid #dcdcdc; }
.drop.page select { background: none; border: 0; }
.page-tab { margin: 0 54px 0 41px; font-weight: 700; }
.icon svg { width: 16px; height: 16px; color: #444; stroke-width: 2.5; }
.shape-id { margin-left: auto; }
.play { margin: 0 16px 0 19px; }
.play svg, .fit svg { width: 26px; height: 26px; }
.zoom { width: 123px; margin: 0 10px; }
.zoom::-webkit-slider-runnable-track { height: 6px; border-radius: 3px; background: linear-gradient(90deg, #bfbfbf 30px, #e0e0e0 30px); }
.zoom::-webkit-slider-thumb { appearance: none; width: 18px; height: 18px; margin-top: -6px; border: 2px solid #bfbfbf; border-radius: 50%; background: #fff; }
.percent { gap: 7px; margin: 0 26px 0 16px; }
.percent .caret { border-width: 4px; border-top-width: 5px; border-bottom: 0; }
.fit + .fit { margin-left: 9px; }
```

FILE: script.js
```
// --- RULERS ---
const NS = 'http://www.w3.org/2000/svg';
const step = 56.68; // distance between two numbered ticks

function add(parent, name, attrs, text) {
    const el = document.createElementNS(NS, name);
    for (const key in attrs) el.setAttribute(key, attrs[key]);
    if (text) el.textContent = text;
    parent.appendChild(el);
}

function drawRulers() {
    const rulerH = document.getElementById('rulerH');
    const rulerV = document.getElementById('rulerV');
    const width = rulerH.getBoundingClientRect().width;
    const height = rulerV.getBoundingClientRect().height;
    rulerH.replaceChildren();
    rulerV.replaceChildren();

    for (let i = 0; i * step < width; i++) {
        const x = Math.round(-3.5 + i * step);
        const half = Math.round(x + step / 2);
        add(rulerH, 'line', { x1: x, x2: x, y1: 0, y2: 26 });
        add(rulerH, 'line', { x1: half, x2: half, y1: 14, y2: 26 });
        add(rulerH, 'text', { x: x + 2, y: 14 }, String(90 + i * 10));
    }

    add(rulerV, 'line', { x1: 0, x2: 27, y1: 0, y2: 0 });
    for (let i = 0; 26 + i * step < height; i++) {
        const y = Math.round(25.5 + i * step);
        const half = Math.round(y + step / 2);
        add(rulerV, 'line', { x1: 0, x2: 27, y1: y, y2: y });
        add(rulerV, 'line', { x1: 15, x2: 27, y1: half, y2: half });
        add(rulerV, 'text', { x: 0, y: 0, 'text-anchor': 'end', transform: `translate(15 ${y + 1}) rotate(-90)` }, String(30 + i * 10));
    }
}
drawRulers();
window.addEventListener('resize', drawRulers);

// --- COLOR PALETTE ---
const colors = [
    '#b40a1a', '#d9091f', '#c84f78', '#e85266', '#ec6b73', '#e6609d', '#e296b8', '#ee8f8a', '#f0909c', '#ff9f7c', '#f0aa94', '#f4bdb8', '#ead4e8', '#ffd2e3', '#fddde2',
    '#0e2350', '#243a72', '#402e78', '#05498f', '#0069a8', '#3c63ad', '#5384c4', '#007fd0', '#008fd2', '#2ba8e2', '#00b2f0', '#2fc8fa', '#8cc0ea', '#a2d8f0', '#cfeaf5',
    '#004334', '#005a31', '#00645c', '#556b2f', '#007c48', '#1c963d', '#00ae9c', '#52bfc0', '#18ccb0', '#47ba80', '#00b050', '#7fba10', '#a3d062', '#bfd843', '#cee8c8',
    '#e3501f', '#ee6c00', '#f28500', '#f39a54', '#f2a600', '#ffae00', '#fdb834', '#f9ca32', '#ffd800', '#ffed00', '#fbf184', '#ffd572', '#ebcc98', '#fddba8', '#fde7d0',
    '#7b326f', '#823f84', '#674096', '#755399', '#98689e', '#9f5a8c', '#cd7bb0', '#a992d0', '#c8a6ca', '#ebc1dc',
    '#5a2a1b', '#773b2e', '#944e2a', '#a65526', '#c07a42', '#b58469', '#deb887', '#d5cac4', '#c8d2ca',
    '#000000', '#3e3838', '#595757', '#717071', '#888888', '#9fa0a0', '#b5b5b6', '#cccccc', '#dcdcdc', '#eeeeee', '#ffffff'
];
const swatches = document.getElementById('swatches');
colors.forEach(color => {
    const cell = document.createElement('i');
    cell.style.background = color;
    swatches.appendChild(cell);
});
```
